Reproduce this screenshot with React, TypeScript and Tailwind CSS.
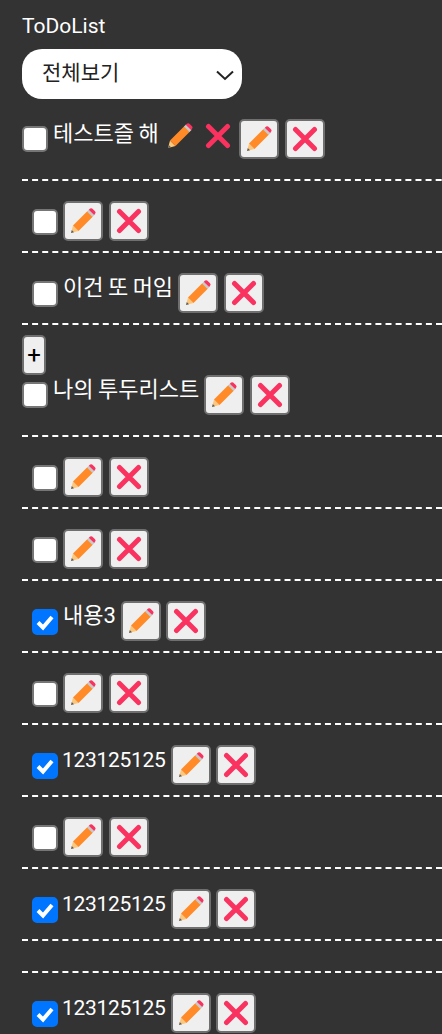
import React from "react";

const PencilIcon = ({ size = 26 }: { size?: number }) => (
  <svg width={size} height={size} viewBox="0 0 26 26">
    <path d="M1 25 L3 17.5 L8.5 23 Z" fill="#fbc77d" />
    <path d="M1 25 L1.8 22 L4 24.2 Z" fill="#5c5c5c" />
    <path d="M3 17.5 L17.5 3 L23 8.5 L8.5 23 Z" fill="#ff8a27" />
    <path d="M17 3.5 L19 1.5 L24.5 7 L22.5 9 Z" fill="#c9c9c9" />
    <path d="M18.8 1.7 L20.2 0.6 Q21.5 -0.2 22.7 0.9 L25 3.2 Q26 4.4 25.2 5.6 L24.2 7 Z" fill="#f9325f" />
  </svg>
);

const CrossIcon = ({ size = 26 }: { size?: number }) => (
  <svg width={size} height={size} viewBox="0 0 26 26">
    <path d="M3.5 3.5 L22.5 22.5 M22.5 3.5 L3.5 22.5" stroke="#f9325f" strokeWidth="5" strokeLinecap="round" />
  </svg>
);

const IconButton = ({ children }: { children: React.ReactNode }) => (
  <button className="flex items-center justify-center w-10 h-10 shrink-0 rounded-[5px] border-2 border-[#6f6f6f] bg-[#efefef]">
    {children}
  </button>
);

const Actions = () => (
  <div className="flex gap-[5.5px] ml-[5px]">
    <IconButton>
      <PencilIcon />
    </IconButton>
    <IconButton>
      <CrossIcon />
    </IconButton>
  </div>
);

const Check = ({ checked, nested }: { checked?: boolean; nested?: boolean }) => (
  <span className={nested ? "relative block w-[26px] h-[26px] mt-[8px] shrink-0" : "relative block w-[26px] h-[26px] mt-[7px] shrink-0"}>
    <input
      type="checkbox"
      defaultChecked={checked}
      className="block appearance-none w-[26px] h-[26px] m-0 rounded-[5px] border-2 border-[#767676] bg-white checked:border-[#0075ff] checked:bg-[#0075ff]"
    />
    {checked && (
      <svg className="absolute left-0 top-0 pointer-events-none" width="26" height="26" viewBox="0 0 26 26">
        <path d="M6 13.5 L11 18.5 L20 8" fill="none" stroke="white" strokeWidth="4" />
      </svg>
    )}
  </span>
);

const Label = ({ text, wide }: { text: string; wide?: boolean }) => (
  <span
    className={
      wide
        ? "ml-[5px] text-[22px] leading-[30px] text-white [word-spacing:-1px]"
        : "ml-1 text-[21px] leading-[30px] text-white tracking-[-0.3px]"
    }
  >
    {text}
  </span>
);

const Item = ({ text, checked, wide }: { text?: string; checked?: boolean; wide?: boolean }) => (
  <li className="flex items-start pl-2.5 pt-[20px] pb-[10px] h-[72px] border-b-2 border-dashed border-white">
    <Check checked={checked} nested />
    {text && <Label text={text} wide={wide} />}
    <Actions />
  </li>
);

export default function App() {
  return (
    <div className="w-[442px] h-[1034px] overflow-hidden bg-[#333333] pl-[22px] pt-[13px] font-['Roboto','Noto_Sans_CJK_KR',sans-serif]">
      <h1 className="text-[21px] leading-[26px] text-white">ToDoList</h1>
      <div className="relative w-[220px] mt-[10px]">
        <select className="block appearance-none w-[220px] h-[50px] pl-5 rounded-[20px] bg-white text-[21px] text-[#222222]">
          <option>전체보기</option>
        </select>
        <svg className="absolute right-[8px] top-[21px] pointer-events-none" width="18" height="11" viewBox="0 0 18 11">
          <path d="M1 1.5 L9 9 L17 1.5" fill="none" stroke="#222222" strokeWidth="2" />
        </svg>
      </div>

      <section className="mt-[20px]">
        <div className="flex items-start h-[60px] -mr-10 border-b-2 border-dashed border-white box-content">
          <Check />
          <Label text="테스트즐 해" wide />
          <span className="ml-[8px] mt-1">
            <PencilIcon />
          </span>
          <span className="ml-[12px] mt-1">
            <CrossIcon />
          </span>
          <div className="ml-[3.5px]">
            <Actions />
          </div>
        </div>
        <ul>
          <Item />
          <Item text="이건 또 머임" wide />
        </ul>
      </section>

      <section className="mt-[10px]">
        <button className="block w-6 h-10 rounded-[5px] border-2 border-[#6f6f6f] bg-[#efefef] text-[24px] leading-none text-black">+</button>
        <div className="flex items-start h-[60px] border-b-2 border-dashed border-white box-content">
          <Check />
          <Label text="나의 투두리스트" wide />
          <Actions />
        </div>
        <ul>
          <Item />
          <Item />
          <Item text="내용3" checked wide />
          <Item />
          <Item text="123125125" checked />
          <Item />
          <Item text="123125125" checked />
          <li className="h-8 border-b-2 border-dashed border-white" />
          <Item text="123125125" checked />
        </ul>
      </section>
    </div>
  );
}
